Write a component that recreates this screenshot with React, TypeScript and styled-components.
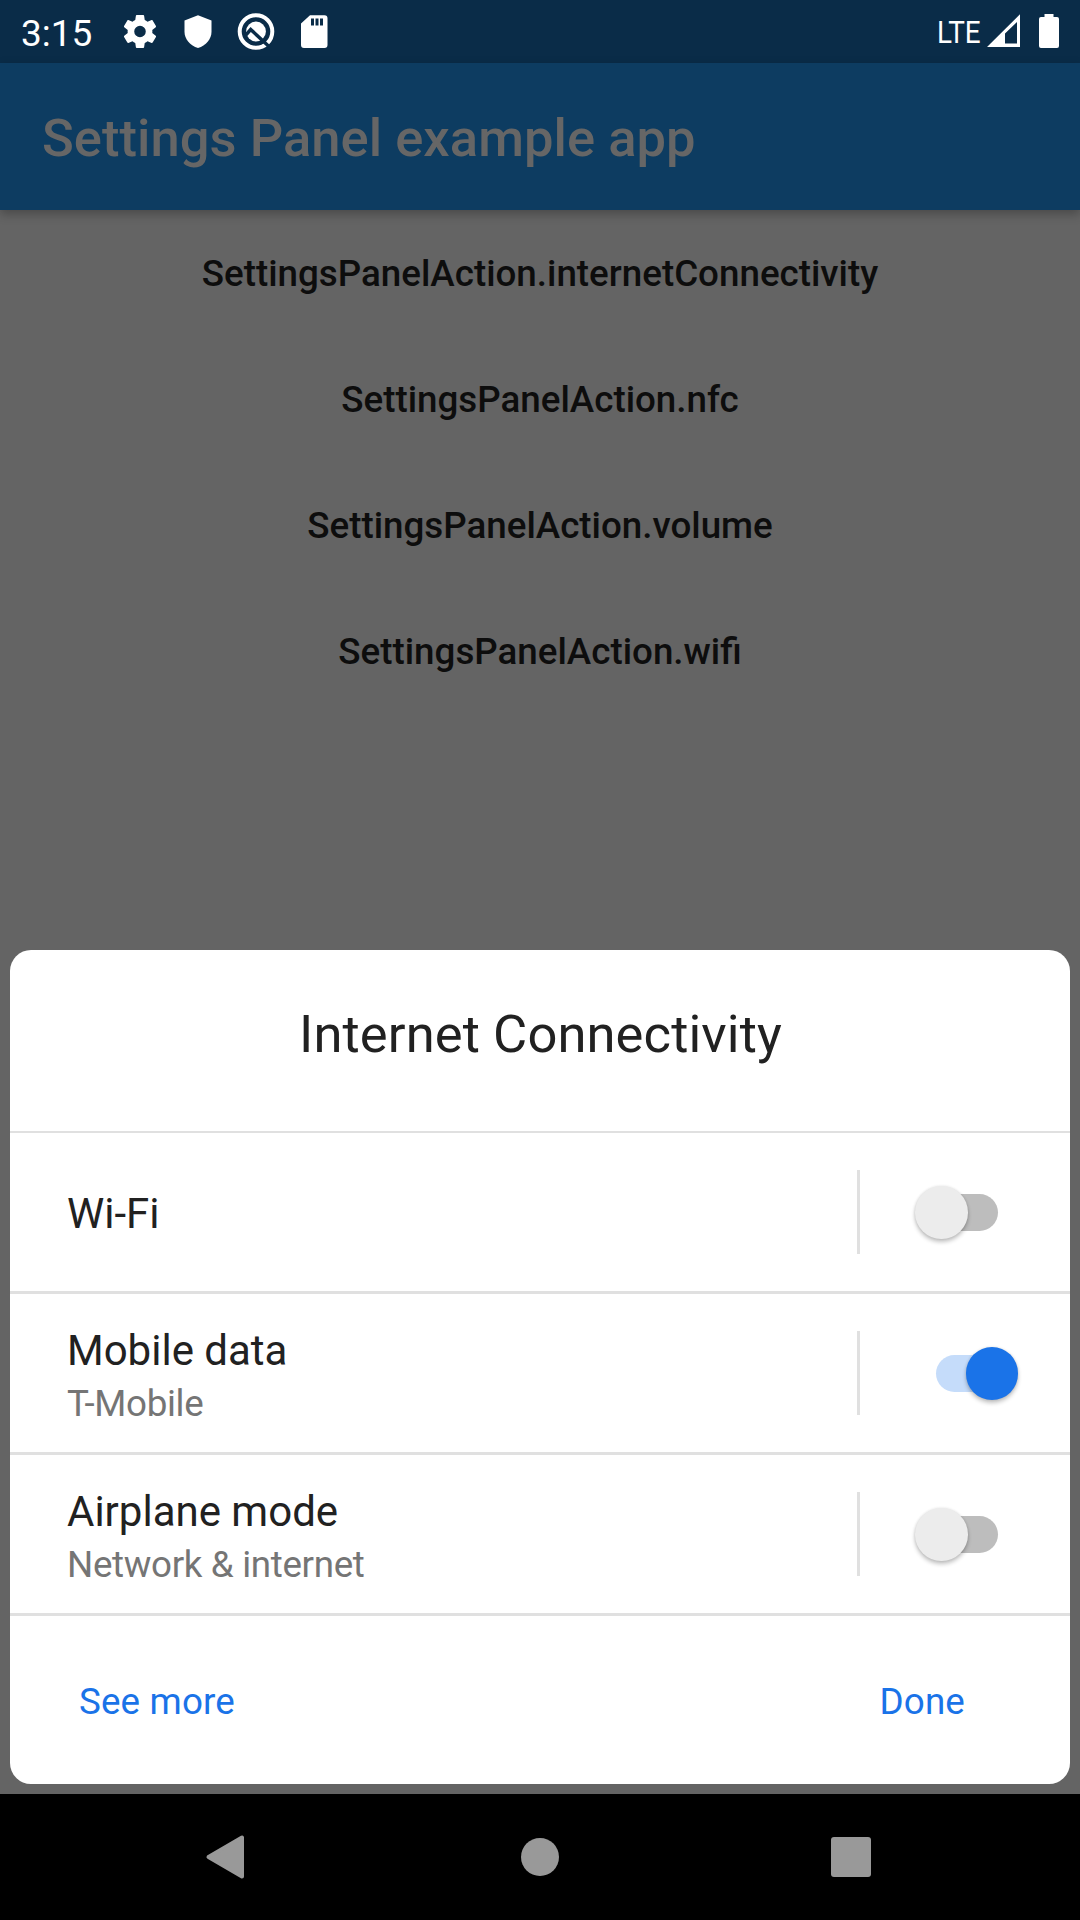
import React from "react";
import styled, { createGlobalStyle } from "styled-components";

const GlobalStyle = createGlobalStyle`
  * { box-sizing: border-box; }
  body { margin: 0; background: #000; font-family: Roboto, "Liberation Sans", sans-serif; }
  button { border: 0; padding: 0; background: none; font: inherit; }
`;

const Screen = styled.div`
  display: flex;
  flex-direction: column;
  width: 1080px;
  height: 1920px;
  overflow: hidden;
  background: #646464;
`;

const StatusBar = styled.header`
  display: flex;
  align-items: center;
  justify-content: space-between;
  flex: none;
  height: 63px;
  padding: 0 21px;
  background: #0a2c48;
  color: #fff;
`;

const StatusGroup = styled.div`
  display: flex;
  align-items: center;
`;

const Clock = styled.span`
  width: 95px;
  font-size: 37px;
  line-height: 44px;
  padding-top: 4px;
`;

const StatusIcons = styled.svg`
  display: block;
`;

const Network = styled.span`
  width: 50px;
  font-size: 32px;
  line-height: 38px;
  transform: scaleX(0.87);
  transform-origin: left center;
`;

const AppBar = styled.div`
  display: flex;
  align-items: center;
  flex: none;
  height: 147px;
  padding: 2px 42px 0;
  background: #0d3c61;
  box-shadow: 0 4px 10px rgba(0, 0, 0, 0.28);
  z-index: 1;
`;

const AppTitle = styled.h1`
  margin: 0;
  color: #666;
  font-size: 52.5px;
  font-weight: 500;
  line-height: 62px;
  letter-spacing: 0.04px;
`;

const Actions = styled.div`
  display: flex;
  flex-direction: column;
  flex: none;
  height: 740px;
`;

const ActionButton = styled.button`
  height: 126px;
  color: #0d0d0d;
  font-size: 36.75px;
  font-weight: 500;
`;

const Panel = styled.section`
  display: flex;
  flex-direction: column;
  flex: none;
  height: 834px;
  margin: 0 10px 10px;
  border-radius: 21px;
  background: #fff;
`;

const PanelTitle = styled.h2`
  display: flex;
  justify-content: center;
  height: 183px;
  margin: 0;
  padding: 53px 0 0 1px;
  border-bottom: 2px solid #e0e0e0;
  color: #212121;
  font-size: 52.5px;
  font-weight: 400;
  line-height: 62px;
  letter-spacing: 0.1px;
`;

const Row = styled.div`
  display: flex;
  align-items: center;
  height: 161px;
  padding-left: 57px;
  border-bottom: 3px solid #e0e0e0;
`;

const Labels = styled.div<{ $double: boolean }>`
  flex: 1;
  padding-top: ${(p) => (p.$double ? "6px" : "4px")};
`;

const Label = styled.div`
  color: #212121;
  font-size: 42px;
  line-height: 50px;
`;

const SubLabel = styled.div`
  padding-top: 6px;
  color: #757575;
  font-size: 36.75px;
  line-height: 44px;
  letter-spacing: -0.33px;
`;

const SwitchCell = styled.div`
  display: flex;
  align-items: center;
  justify-content: center;
  width: 213px;
  height: 84px;
  border-left: 3px solid #e0e0e0;
`;

const Track = styled.button<{ $on: boolean }>`
  display: flex;
  align-items: center;
  justify-content: ${(p) => (p.$on ? "flex-end" : "flex-start")};
  width: 62px;
  height: 37px;
  margin: 1px 0 0 3px;
  border-radius: 19px;
  background: ${(p) => (p.$on ? "#c5dcfa" : "#bdbdbd")};
`;

const Thumb = styled.span<{ $on: boolean }>`
  flex: none;
  width: 52.5px;
  height: 52.5px;
  margin: 0 -20.5px;
  border-radius: 50%;
  background: ${(p) => (p.$on ? "#1a73e8" : "#ececec")};
  box-shadow: 0 3px 4px rgba(0, 0, 0, 0.24), 0 0 3px rgba(0, 0, 0, 0.1);
`;

const PanelFooter = styled.footer`
  display: flex;
  align-items: center;
  justify-content: space-between;
  flex: 1;
  padding: 4px 105px 0 69px;
`;

const TextButton = styled.button`
  color: #1a73e8;
  font-size: 36.75px;
  line-height: 44px;
  letter-spacing: 0.15px;
`;

const NavBar = styled.nav`
  display: block;
  flex: none;
  height: 126px;
  background: #000;
`;

const actions = ["internetConnectivity", "nfc", "volume", "wifi"];

const settings = [
  { label: "Wi-Fi", on: false },
  { label: "Mobile data", sub: "T-Mobile", on: true },
  { label: "Airplane mode", sub: "Network & internet", on: false },
];

const GEAR =
  "M19.43 12.98c.04-.32.07-.64.07-.98s-.03-.66-.07-.98l2.11-1.65c.19-.15.24-.42.12-.64l-2-3.46c-.12-.22-.39-.3-.61-.22l-2.49 1c-.52-.4-1.08-.73-1.69-.98l-.38-2.65C14.46 2.18 14.25 2 14 2h-4c-.25 0-.46.18-.49.42l-.38 2.65c-.61.25-1.17.59-1.69.98l-2.49-1c-.23-.09-.49 0-.61.22l-2 3.46c-.13.22-.07.49.12.64l2.11 1.65c-.04.32-.07.65-.07.98s.03.66.07.98l-2.11 1.65c-.19.15-.24.42-.12.64l2 3.46c.12.22.39.3.61.22l2.49-1c.52.4 1.08.73 1.69.98l.38 2.65c.03.24.24.42.49.42h4c.25 0 .46-.18.49-.42l.38-2.65c.61-.25 1.17-.59 1.69-.98l2.49 1c.23.09.49 0 .61-.22l2-3.46c.12-.22.07-.49-.12-.64l-2.11-1.65zM12 15.5A3.5 3.5 0 1 1 12 8.5a3.5 3.5 0 0 1 0 7z";

function NotificationIcons() {
  return (
    <StatusIcons width="220" height="63" viewBox="116 0 220 63" fill="#fff">
      <path transform="translate(120.2 11.7) scale(1.65)" d={GEAR} />
      <path d="M198 15.3l13.5 5.3v11.2c0 7.5-5.6 13.8-13.5 16.3-7.9-2.5-13.5-8.8-13.5-16.3V20.6z" />
      <circle cx="256" cy="31.5" r="16.3" fill="none" stroke="#fff" strokeWidth="4" />
      <circle cx="256" cy="31.5" r="9.9" />
      <path d="M244.5 36.5l6.2-7L269 46.5" fill="none" stroke="#0a2c48" strokeWidth="3.4" />
      <path
        fillRule="evenodd"
        d="M310 15.3h14.500a3 3 0 0 1 3 3V45a3 3 0 0 1-3 3H304a3 3 0 0 1-3-3V23.500zM311 18.500v7h3v-7zm4.500 0v7h3v-7zm4.500 0v7h3v-7z"
      />
    </StatusIcons>
  );
}

function SystemIcons() {
  return (
    <StatusIcons width="72" height="63" viewBox="987 0 72 63" fill="#fff">
      <path fillRule="evenodd" d="M987 47L1020 14.3V47zM1005 33.5V43.5H1017V22z" />
      <path d="M1044.5 14h9v3h3.500a2 2 0 0 1 2 2v27a2 2 0 0 1-2 2h-16a2 2 0 0 1-2-2V19a2 2 0 0 1 2-2h3.500z" />
    </StatusIcons>
  );
}

function NavIcons() {
  return (
    <svg width="1080" height="126" viewBox="0 1794 1080 126" fill="#999">
      <path
        d="M242 1837.5v39L208.500 1857z"
        stroke="#999"
        strokeWidth="4"
        strokeLinejoin="round"
      />
      <circle cx="540" cy="1857" r="19" />
      <rect x="831" y="1837" width="40" height="40" rx="3" />
    </svg>
  );
}

export default function App() {
  return (
    <>
      <GlobalStyle />
      <Screen>
        <StatusBar>
          <StatusGroup>
            <Clock>3:15</Clock>
            <NotificationIcons />
          </StatusGroup>
          <StatusGroup>
            <Network>LTE</Network>
            <SystemIcons />
          </StatusGroup>
        </StatusBar>
        <AppBar>
          <AppTitle>Settings Panel example app</AppTitle>
        </AppBar>
        <Actions>
          {actions.map((name) => (
            <ActionButton key={name}>SettingsPanelAction.{name}</ActionButton>
          ))}
        </Actions>
        <Panel>
          <PanelTitle>Internet Connectivity</PanelTitle>
          {settings.map((item) => (
            <Row key={item.label}>
              <Labels $double={Boolean(item.sub)}>
                <Label>{item.label}</Label>
                {item.sub && <SubLabel>{item.sub}</SubLabel>}
              </Labels>
              <SwitchCell>
                <Track $on={item.on} role="switch" aria-checked={item.on}>
                  <Thumb $on={item.on} />
                </Track>
              </SwitchCell>
            </Row>
          ))}
          <PanelFooter>
            <TextButton>See more</TextButton>
            <TextButton>Done</TextButton>
          </PanelFooter>
        </Panel>
        <NavBar>
          <NavIcons />
        </NavBar>
      </Screen>
    </>
  );
}
